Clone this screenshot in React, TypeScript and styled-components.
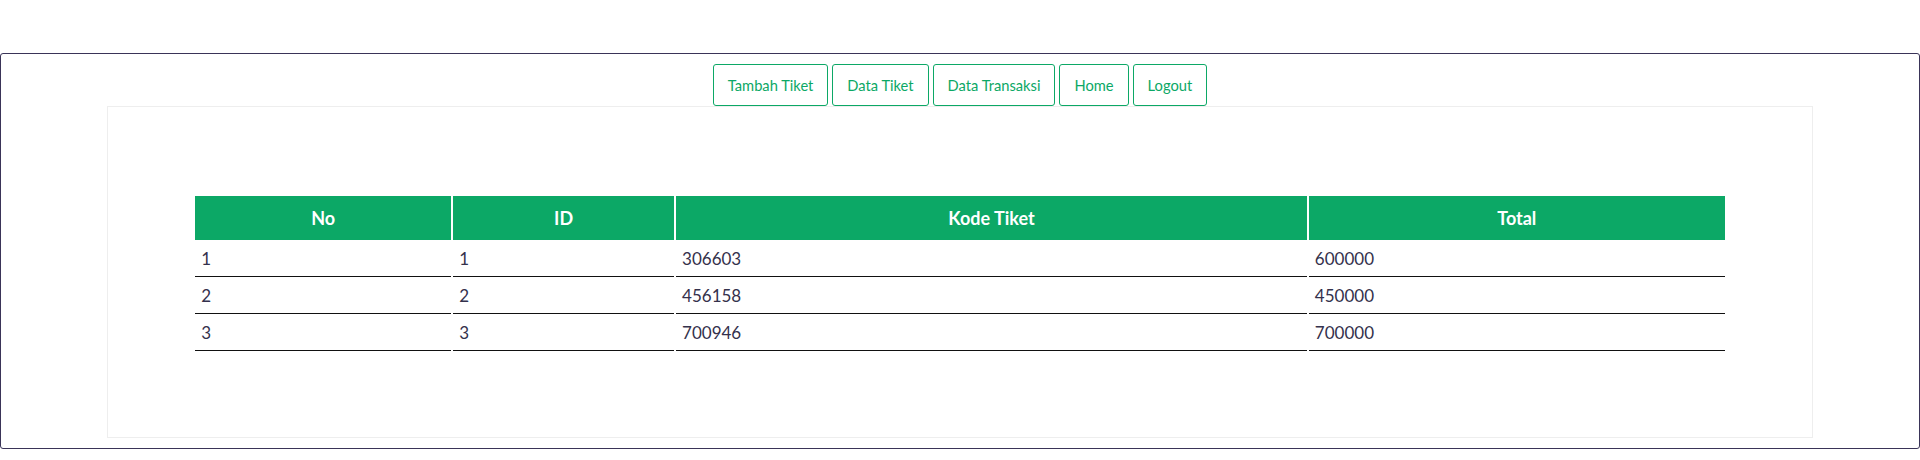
import styled, { createGlobalStyle } from "styled-components";

const GlobalStyle = createGlobalStyle`
  body {
    margin: 0;
    background: #fff;
    font-family: Lato, "Open Sans", sans-serif;
  }
`;

const Frame = styled.div`
  margin-top: 53px;
  border: 1px solid #3a3458;
  border-radius: 3px;
  padding: 10px 106px;
`;

const Nav = styled.nav`
  display: flex;
  justify-content: center;
  gap: 4px;
`;

const NavButton = styled.a`
  display: inline-block;
  padding: 10px 14px;
  font-size: 14.7px;
  line-height: 20px;
  color: #0ca866;
  border: 1px solid #0ca866;
  border-radius: 3px;
  text-decoration: none;
  cursor: pointer;
`;

const Panel = styled.div`
  border: 1px solid #eeeeee;
  padding: 87px 0 84px;
`;

const Table = styled.table`
  width: 90%;
  margin: 0 auto;
  border-spacing: 2px;
  font-size: 17px;
`;

const Th = styled.th`
  background: #0ca866;
  color: #fff;
  font-size: 18px;
  font-weight: 700;
  padding: 12px 6px;
  line-height: 20px;
  text-align: center;
`;

const Td = styled.td`
  padding: 7px 6px;
  line-height: 20px;
  color: #34314c;
  border-bottom: 1px solid #111;
  text-align: left;
`;

const menu = ["Tambah Tiket", "Data Tiket", "Data Transaksi", "Home", "Logout"];

const columns = [
  { label: "No", width: "16.8%" },
  { label: "ID", width: "14.5%" },
  { label: "Kode Tiket", width: "41.4%" },
  { label: "Total", width: "27.3%" },
];

const rows = [
  { no: 1, id: 1, kode: "306603", total: 600000 },
  { no: 2, id: 2, kode: "456158", total: 450000 },
  { no: 3, id: 3, kode: "700946", total: 700000 },
];

function App() {
  return (
    <>
      <GlobalStyle />
      <Frame>
        <Nav>
          {menu.map((item) => (
            <NavButton key={item}>{item}</NavButton>
          ))}
        </Nav>
        <Panel>
          <Table>
            <colgroup>
              {columns.map((c) => (
                <col key={c.label} style={{ width: c.width }} />
              ))}
            </colgroup>
            <thead>
              <tr>
                {columns.map((c) => (
                  <Th key={c.label}>{c.label}</Th>
                ))}
              </tr>
            </thead>
            <tbody>
              {rows.map((r) => (
                <tr key={r.no}>
                  <Td>{r.no}</Td>
                  <Td>{r.id}</Td>
                  <Td>{r.kode}</Td>
                  <Td>{r.total}</Td>
                </tr>
              ))}
            </tbody>
          </Table>
        </Panel>
      </Frame>
    </>
  );
}

export default App;
